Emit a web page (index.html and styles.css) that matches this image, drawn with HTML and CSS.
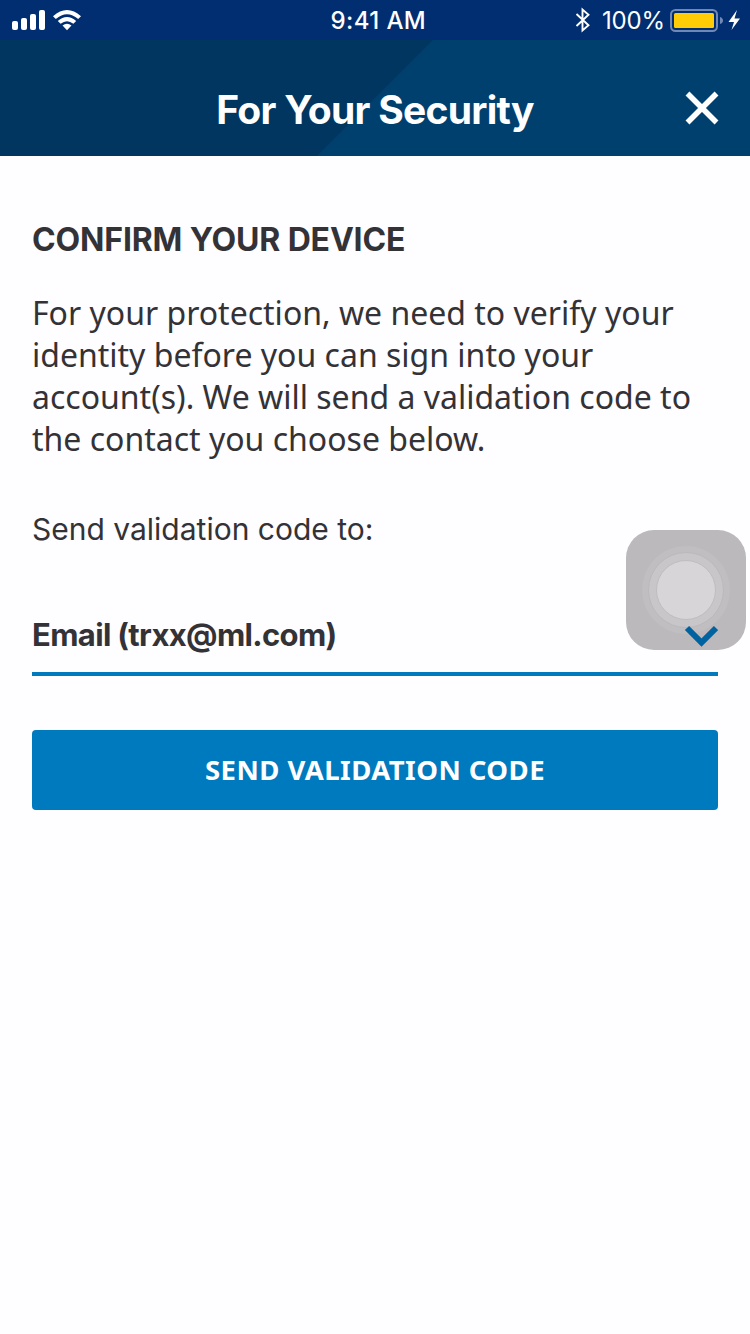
FILE: index.html
```html
<!DOCTYPE html>
<html lang="en">
<head>
<meta charset="utf-8">
<title>For Your Security</title>
<link rel="stylesheet" href="styles.css">
</head>
<body>
<div class="status">
  <svg class="signal" width="72" height="24" viewBox="0 0 72 24" fill="#fff">
    <rect x="2" y="13" width="6" height="9" rx="2"/><rect x="11" y="10" width="6" height="12" rx="2"/><rect x="20" y="6" width="6" height="16" rx="2"/><rect x="29" y="2" width="6" height="20" rx="2"/>
    <path d="M43 8.200Q57 -4.200 71 8.200L68.200 11Q57 1.500 45.800 11Z"/>
    <path d="M47.800 13Q57 5.200 66.200 13L63.400 15.800Q57 10.500 50.600 15.800Z"/>
    <path d="M52.500 17.600Q57 14 61.500 17.600L57 22.200Z"/>
  </svg>
  <span class="time">9:41 AM</span>
  <div class="power">
    <svg width="16" height="26" viewBox="0 0 16 26" fill="none" stroke="#fff" stroke-width="1.900"><path d="M1.500 7L13.500 18.200L7.500 23.500V2.500L13.500 7.800L1.500 19"/></svg>
    <span class="percent">100%</span>
    <svg class="battery" width="72" height="24" viewBox="0 0 72 24">
      <rect x="1" y="2" width="46" height="21" rx="4.500" fill="none" stroke="#7187b4" stroke-width="2"/>
      <rect x="4" y="5" width="40" height="15" rx="1.500" fill="#ffcc05"/>
      <path d="M50 9Q53 10 53 12.500Q53 15 50 16Z" fill="#7187b4"/>
      <path d="M67 2L58.500 14H64L61.500 22L70 10.500H64.500Z" fill="#fff"/>
    </svg>
  </div>
</div>
<header class="header">
  <h1 class="title">For Your Security</h1>
  <svg class="close" width="34" height="34" viewBox="0 0 34 34" stroke="#fff" stroke-width="5.500"><path d="M2.500 2.500L31.500 31.500M31.500 2.500L2.500 31.500"/></svg>
</header>
<main class="content">
  <h2 class="heading">CONFIRM YOUR DEVICE</h2>
  <p class="copy">For your protection, we need to verify your<br>identity before you can sign into your<br>account(s). We will send a validation code to<br>the contact you choose below.</p>
  <p class="label">Send validation code to:</p>
  <div class="select">
    <span class="value">Email (trxx@ml.com)</span>
    <svg class="chevron" width="34" height="24" viewBox="0 0 34 24" fill="none" stroke="#00629f" stroke-width="6"><path d="M3 4L17.500 18.500L32 4"/></svg>
  </div>
  <button class="send">SEND VALIDATION CODE</button>
</main>
<div class="touch"><div class="ring outer"><div class="ring middle"><div class="ring inner"></div></div></div></div>
</body>
</html>
```
FILE: styles.css
```css
* { box-sizing: border-box; }
body { margin: 0; width: 750px; height: 1334px; overflow: hidden; background: #fefdff; color: #333236; font-family: Inter, "Liberation Sans", sans-serif; }
h1, h2, p { margin: 0; white-space: nowrap; }
.status { display: grid; grid-template-columns: 330.5px 1fr auto; height: 40px; padding: 0 8px 0 0; align-items: center; background: #002e70; color: #fff; font-size: 24px; line-height: 38px; }
.signal { margin-left: 10px; }
.time { font-weight: 500; letter-spacing: .4px; padding-top: 2px; }
.power { display: flex; align-items: center; }
.percent { margin-left: 11px; width: 68px; padding-top: 2px; letter-spacing: -.2px; }
.battery { display: block; }
.header { position: relative; display: flex; align-items: center; justify-content: center; height: 116px; padding-top: 24px; color: #fff; background: #00406f; }
.header::before { content: ""; position: absolute; inset: 0; background: #003660; clip-path: polygon(0 0, 433px 0, 317px 100%, 0 100%); }
.title { position: relative; font-size: 39px; line-height: 48px; font-weight: 650; letter-spacing: -.72px; }
.close { position: absolute; left: 685px; top: 51px; }
.content { display: flex; flex-direction: column; padding: 64px 32px 0; }
.heading { font-size: 32px; line-height: 40px; font-weight: 650; letter-spacing: -.15px; }
.copy { margin-top: 32px; font-family: "Noto Sans", sans-serif; font-size: 32px; line-height: 42px; }
.label { margin-top: 49px; font-size: 30px; line-height: 40px; }
.select { display: flex; justify-content: space-between; align-items: center; height: 76px; margin-top: 51px; border-bottom: 4px solid #007abd; }
.value { font-size: 31px; font-weight: 650; letter-spacing: -.66px; white-space: nowrap; padding-bottom: 3px; }
.chevron { position: relative; z-index: 3; }
.send { height: 80px; margin-top: 54px; padding: 0 0 2px; border: 0; border-radius: 4px; background: #007abe; color: #fff; font: 700 27.500px "Noto Sans", sans-serif; letter-spacing: .45px; }
.touch { position: absolute; z-index: 2; left: 626px; top: 530px; width: 120px; height: 120px; border-radius: 28px; background: #bbb9bc; display: grid; place-items: center; }
.ring { display: grid; place-items: center; border-radius: 50%; }
.outer { width: 88px; height: 88px; background: #c0bec1; }
.middle { width: 76px; height: 76px; background: #c8c6c9; border: 1px solid #bbb9bd; }
.inner { width: 60px; height: 60px; background: #d7d5d8; border: 1px solid #bfbdc0; }
```
